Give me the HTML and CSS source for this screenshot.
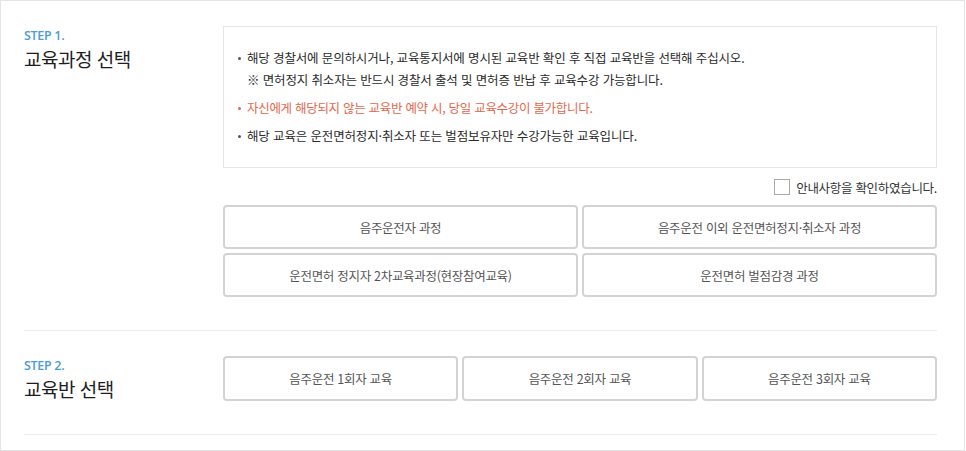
FILE: index.html
```html
<!DOCTYPE html>
<html lang="ko">
<head>
<meta charset="utf-8">
<title>교육과정 선택</title>
<link rel="stylesheet" href="styles.css">
</head>
<body>
<div class="wrap">
  <section class="step">
    <div class="head">
      <p class="num">STEP 1.</p>
      <h2 class="title">교육과정 선택</h2>
    </div>
    <div class="body">
      <div class="notice">
        <ul>
          <li class="dot">해당 경찰서에 문의하시거나, 교육통지서에 명시된 교육반 확인 후 직접 교육반을 선택해 주십시오.<br>※ 면허정지 취소자는 반드시 경찰서 출석 및 면허증 반납 후 교육수강 가능합니다.</li>
          <li class="dot red">자신에게 해당되지 않는 교육반 예약 시, 당일 교육수강이 불가합니다.</li>
          <li class="dot">해당 교육은 운전면허정지·취소자 또는 벌점보유자만 수강가능한 교육입니다.</li>
        </ul>
      </div>
      <label class="check"><span class="box"></span>안내사항을 확인하였습니다.</label>
      <div class="btns two">
        <button class="btn">음주운전자 과정</button>
        <button class="btn">음주운전 이외 운전면허정지·취소자 과정</button>
        <button class="btn">운전면허 정지자 2차교육과정(현장참여교육)</button>
        <button class="btn">운전면허 벌점감경 과정</button>
      </div>
    </div>
  </section>
  <section class="step">
    <div class="head">
      <p class="num">STEP 2.</p>
      <h2 class="title">교육반 선택</h2>
    </div>
    <div class="body">
      <div class="btns three">
        <button class="btn">음주운전 1회자 교육</button>
        <button class="btn">음주운전 2회자 교육</button>
        <button class="btn">음주운전 3회자 교육</button>
      </div>
    </div>
  </section>
</div>
</body>
</html>
```
FILE: styles.css
```css
* { box-sizing: border-box; }
html, body { margin: 0; padding: 0; background: #fff; }
body {
  font-family: "Noto Sans CJK KR", "Noto Sans", sans-serif;
  color: #333;
}
.wrap {
  width: 965px;
  height: 451px;
  border: 1px solid #e4e4e4;
  padding: 0 27px 0 23px;
}
.step {
  display: grid;
  grid-template-columns: 199px 1fr;
  padding: 25px 0 33px;
  border-bottom: 1px solid #eeeeee;
}
.head { padding-top: 2px; }
.num {
  margin: 0;
  font-family: "Open Sans", "Noto Sans", sans-serif;
  font-weight: 600;
  font-size: 12.5px;
  line-height: 16px;
  letter-spacing: -0.3px;
  color: #4a9bd6;
}
.title {
  margin: 3px 0 0;
  font-weight: 400;
  font-size: 19px;
  line-height: 24px;
  letter-spacing: -0.5px;
  color: #1e1e1e;
}
.notice {
  border: 1px solid #e5e5e5;
  padding: 20px 14px 20px 14px;
}
.notice ul { margin: 0; padding: 0; list-style: none; }
.dot {
  position: relative;
  padding-left: 9px;
  font-size: 12.5px;
  line-height: 22px;
  letter-spacing: -0.15px;
  color: #2a2a2a;
  margin-bottom: 6px;
}
.dot:last-child { margin-bottom: 0; }
.dot::before {
  content: "";
  position: absolute;
  left: 0;
  top: 10px;
  width: 3px;
  height: 3px;
  border-radius: 50%;
  background: #555;
}
.red { color: #e2684c; letter-spacing: -0.3px; }
.red::before { background: #e2684c; }
.check {
  display: flex;
  justify-content: flex-end;
  align-items: center;
  gap: 6px;
  height: 18px;
  margin: 10px 0 9px;
  font-size: 12.5px;
  letter-spacing: -0.3px;
  color: #333;
}
.box {
  width: 16px;
  height: 16px;
  border: 1px solid #aaa;
  background: #fff;
}
.btns { display: grid; gap: 4px; }
.two { grid-template-columns: 1fr 1fr; }
.three { grid-template-columns: 1fr 1fr 1fr; }
.btn {
  height: 44px;
  border: 2px solid #d3d3d3;
  border-radius: 4px;
  background: #fff;
  font-family: "Noto Sans CJK KR", "Noto Sans", sans-serif;
  font-size: 12.5px;
  letter-spacing: -0.3px;
  color: #555;
  padding: 0;
}
.three .btn { height: 45px; }
```
